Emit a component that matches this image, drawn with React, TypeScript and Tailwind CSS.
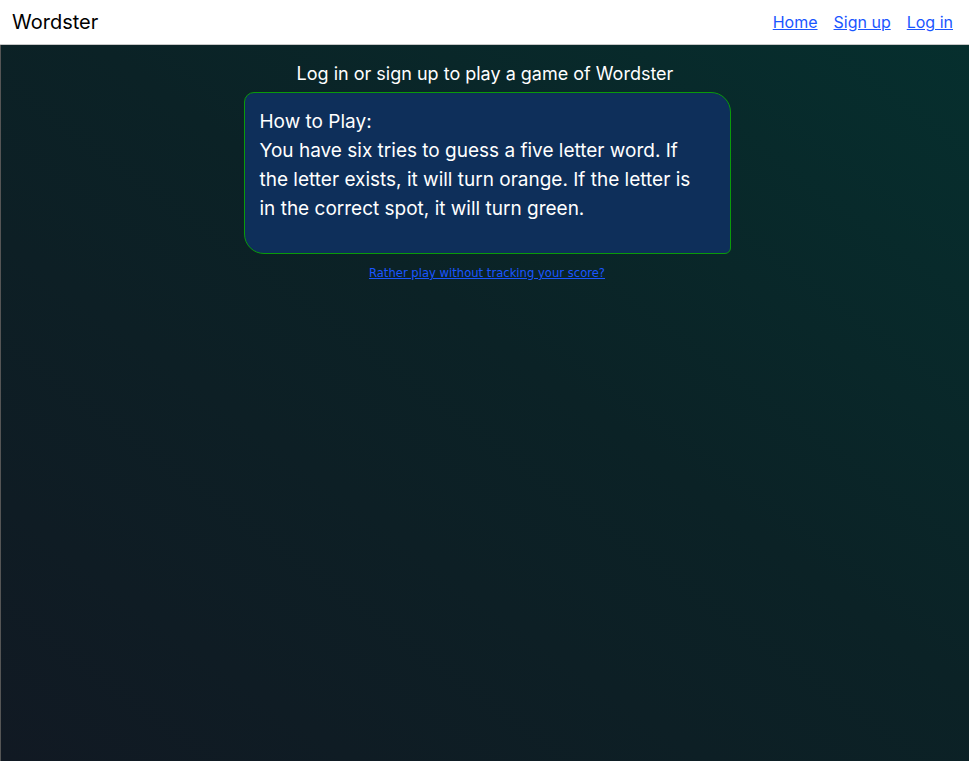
export default function App() {
  return (
    <div className="flex h-[761px] flex-col font-['Inter',sans-serif]">
      <header className="flex h-[45px] shrink-0 items-center justify-between border-b border-[#c8c8c8] bg-white pl-3 pr-4">
        <h1 className="text-[20px] text-black">Wordster</h1>
        <nav className="flex gap-4 text-[16px]">
          <a href="#" className="text-[#1a56ff] underline">Home</a>
          <a href="#" className="text-[#1a56ff] underline">Sign up</a>
          <a href="#" className="text-[#1a56ff] underline">Log in</a>
        </nav>
      </header>
      <main className="flex flex-1 flex-col items-center border-l border-[#555] bg-[linear-gradient(to_top_right,#111923,#0b2226_55%,#062f2e)] pt-[16px]">
        <p className="text-[18px] leading-[26px] text-white">Log in or sign up to play a game of Wordster</p>
        <div className="ml-[4px] mt-[5px] h-[162px] w-[487px] rounded-tl-[10px] rounded-tr-[20px] rounded-br-[6px] rounded-bl-[20px] border border-[#0a9a0a] bg-[#0e2f5a] pl-[15px] pr-[30px] pt-[14px] text-[19px] leading-[29px] text-white">
          <p>How to Play:</p>
          <p>You have six tries to guess a five letter word. If the letter exists, it will turn orange. If the letter is in the correct spot, it will turn green.</p>
        </div>
        <a href="#" className="ml-[4px] mt-[11px] font-['DejaVu_Sans',sans-serif] text-[11.6px] text-[#1a56ff] underline">
          Rather play without tracking your score?
        </a>
      </main>
    </div>
  );
}
